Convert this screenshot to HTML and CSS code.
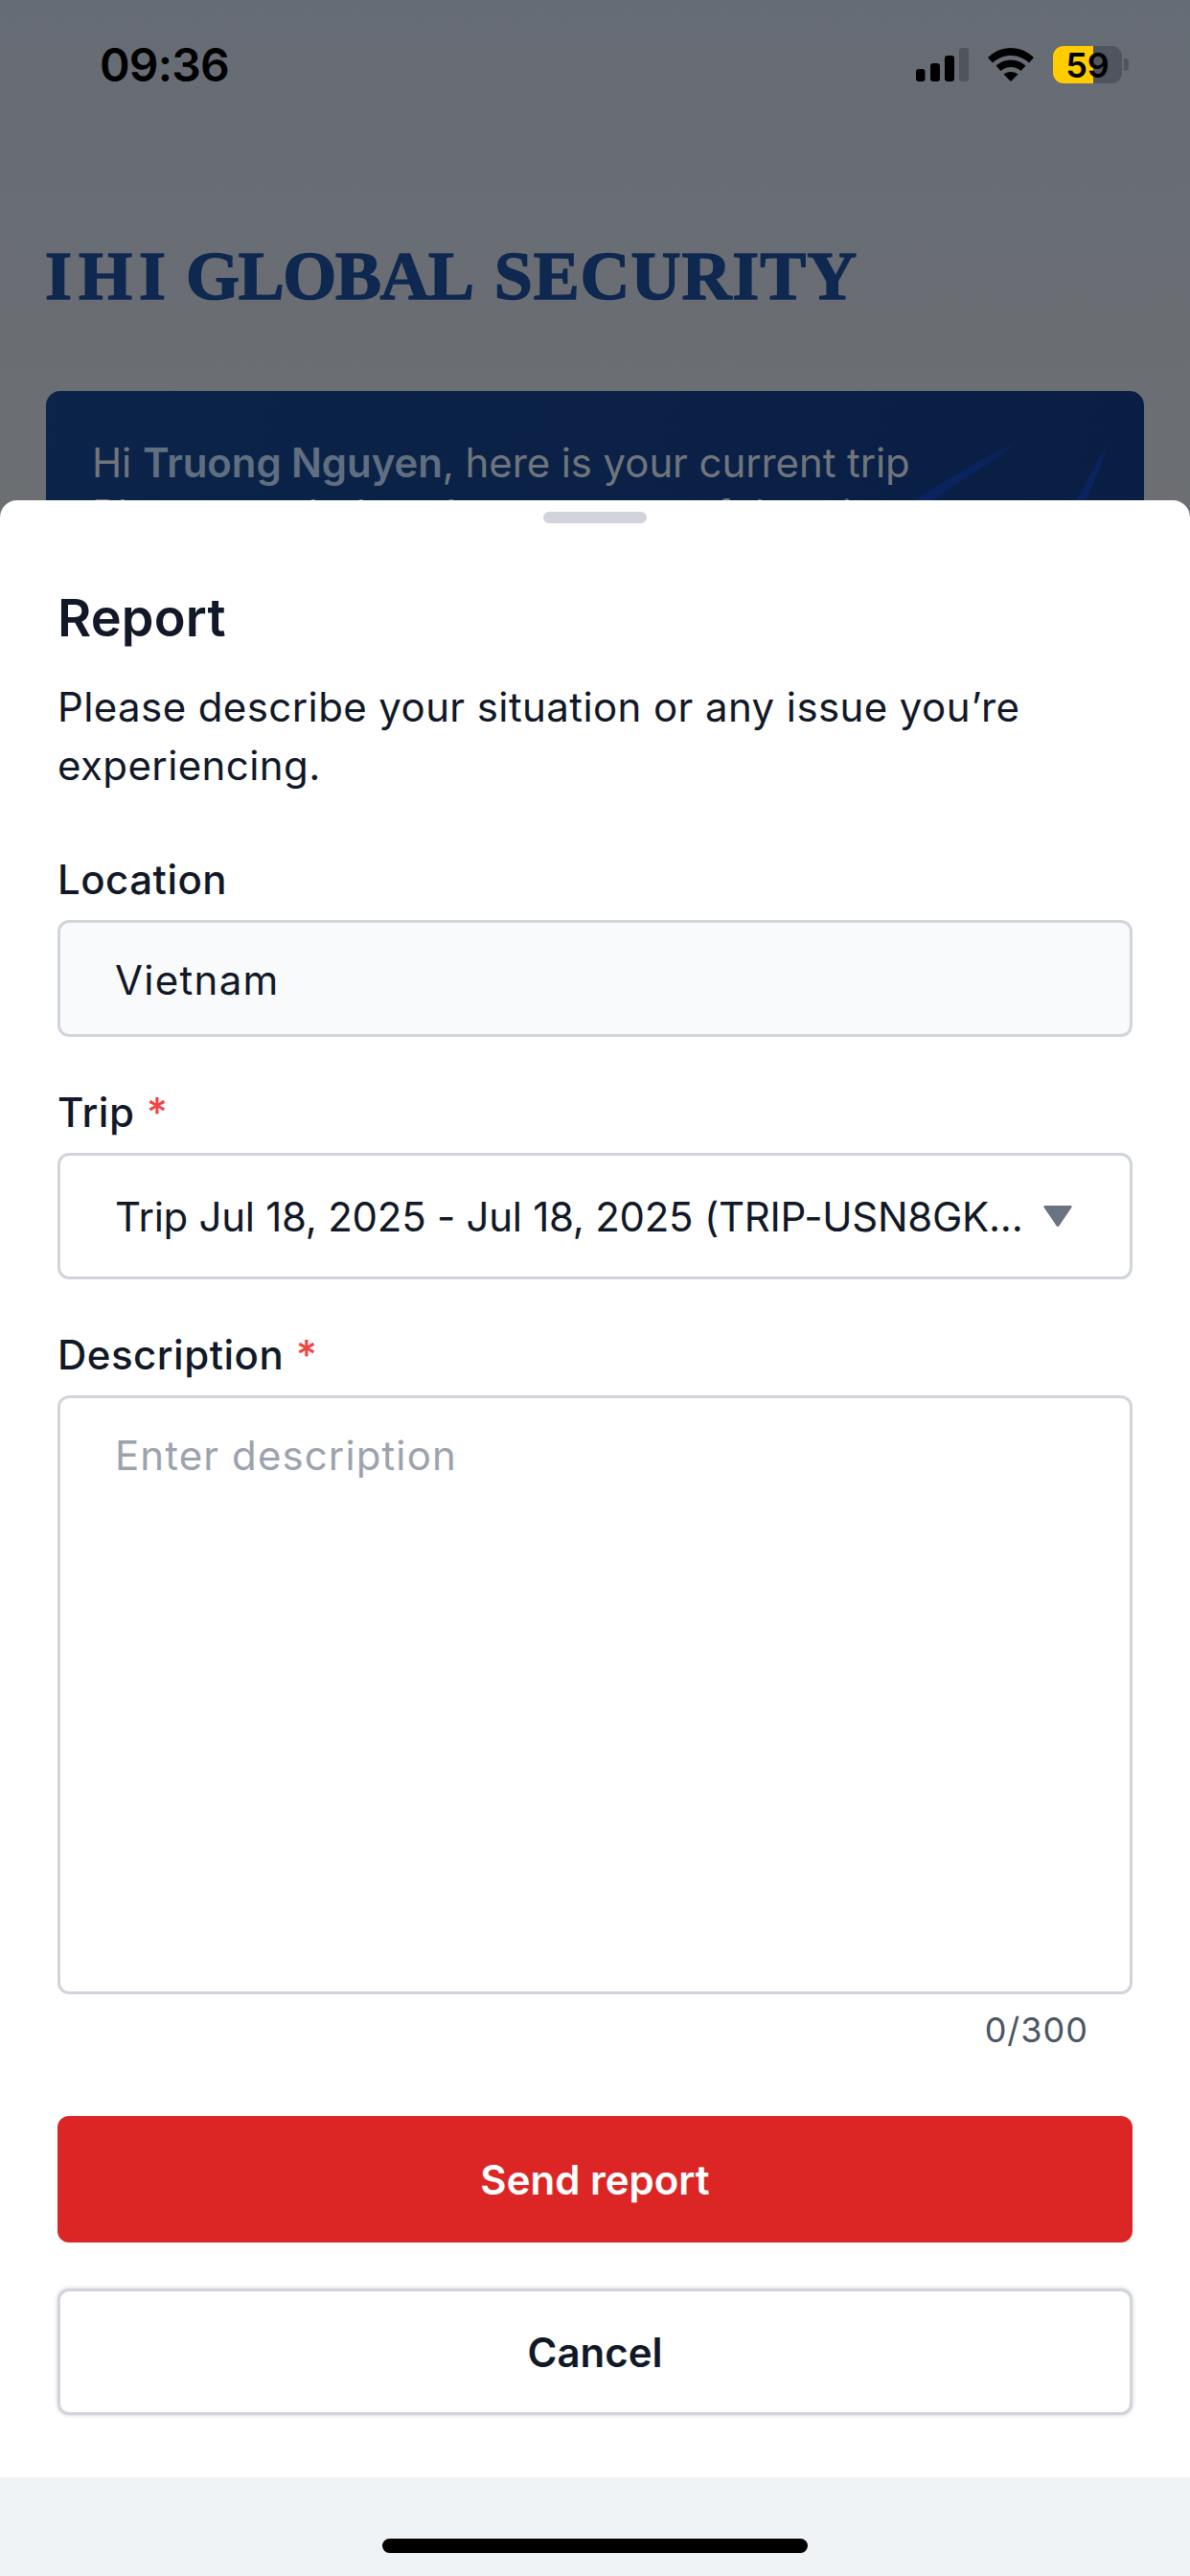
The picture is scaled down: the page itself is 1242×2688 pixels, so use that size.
FILE: index.html
```html
<!DOCTYPE html>
<html lang="en">
<head>
    <meta charset="UTF-8">
    <meta name="viewport" content="width=device-width, initial-scale=1.0">
    <title>IHI Global Security - Report</title>
    <link rel="stylesheet" href="styles.css">
</head>
<body>
<div class="screen">

    <!-- page behind the sheet -->
    <div class="backdrop">
        <div class="status">
            <span class="clock">09:36</span>
            <div class="status-icons">
                <svg class="signal" width="55" height="35" viewBox="0 0 55 35">
                    <rect x="0" y="22" width="9.500" height="13" rx="3"/>
                    <rect x="15" y="16" width="10" height="19" rx="3"/>
                    <rect x="30" y="8" width="10" height="27" rx="3"/>
                    <rect x="45" y="0" width="10" height="35" rx="3" fill="#50545c"/>
                </svg>
                <svg class="wifi" width="48" height="35" viewBox="0 0 48 35">
                    <path d="M24 0C15 0 7 3.500 0 10l5 5.500C10.500 10.500 17 8 24 8s13.500 2.500 19 7.500L48 10C41 3.500 33 0 24 0z"/>
                    <path d="M24 12.500c-6 0-11 2-15.500 6l5 5.500c3-2.700 6.500-4 10.500-4s7.500 1.300 10.500 4l5-5.500c-4.500-4-9.500-6-15.500-6z"/>
                    <path d="M24 25c-3 0-5.500 1-7.500 2.500L24 35l7.500-7.500C29.500 26 27 25 24 25z"/>
                </svg>
                <div class="battery">
                    <div class="battery-fill"></div>
                    <span class="battery-num">59</span>
                    <div class="battery-tip"></div>
                </div>
            </div>
        </div>

        <h1 class="brand">
            <span class="brand-ihi">IHI</span>
            <span class="brand-global">GLOBAL</span>
            <span class="brand-security">SECURITY</span>
        </h1>

        <div class="trip-card">
            <svg class="card-lines" width="1146" height="192" viewBox="0 0 1146 192" fill="none">
                <defs>
                    <linearGradient id="lineFade" x1="0" y1="45" x2="0" y2="114" gradientUnits="userSpaceOnUse">
                        <stop offset="0" stop-color="#0a2460" stop-opacity="0"/>
                        <stop offset="0.5" stop-color="#0a2460"/>
                        <stop offset="1" stop-color="#0a2460"/>
                    </linearGradient>
                </defs>
                <path d="M1032 42C990 64 945 88 905 116L922 116C960 90 1000 66 1032 42z" fill="url(#lineFade)"/>
                <path d="M1110 48C1098 72 1088 94 1074 116L1084 116C1095 94 1104 72 1110 48z" fill="url(#lineFade)"/>
            </svg>
            <p class="card-title">Hi <b>Truong Nguyen</b>, here is your current trip</p>
            <p class="card-sub">Please see below the summary of the trip</p>
        </div>
    </div>

    <!-- report sheet -->
    <div class="sheet">
        <div class="sheet-body">
            <div class="handle"></div>
            <h2 class="sheet-title">Report</h2>
            <p class="sheet-desc">Please describe your situation or any issue you’re experiencing.</p>

            <label class="label">Location</label>
            <div class="field field-disabled">Vietnam</div>

            <label class="label">Trip <span class="req">*</span></label>
            <div class="field field-select">
                <span class="select-text">Trip Jul 18, 2025 - Jul 18, 2025 (TRIP-USN8GK...</span>
                <svg width="30" height="24" viewBox="0 0 30 24"><path d="M2 1h26c1.500 0 2 1 1.200 2.200L16.500 22c-.8 1.200-2.200 1.200-3 0L.8 3.200C0 2 .5 1 2 1z" fill="#6b7280"/></svg>
            </div>

            <label class="label">Description <span class="req">*</span></label>
            <div class="field field-area">Enter description</div>
            <div class="counter">0/300</div>

            <button class="btn btn-send">Send report</button>
            <button class="btn btn-cancel">Cancel</button>
        </div>
        <div class="home-area">
            <div class="home-bar"></div>
        </div>
    </div>
</div>
</body>
</html>
```

FILE: styles.css
```css
*{
    box-sizing:border-box;
}

body{
    margin:0;
    font-family:Inter, "Liberation Sans", sans-serif;
}

.screen{
    position:relative;
    width:1242px;
    height:2688px;
    overflow:hidden;
    background:#eff3f5;
}

/* page behind, already dimmed */
.backdrop{
    height:600px;
    background:linear-gradient(#666c75, #6d6f72);
}

.status{
    display:flex;
    justify-content:space-between;
    align-items:center;
    height:135px;
    padding:0 71px 0 104px;
}

.clock{
    font-size:48px;
    font-weight:600;
    letter-spacing:-0.800px;
    color:#000;
}

.status-icons{
    display:flex;
    align-items:center;
    gap:20px;
}

.signal,
.wifi{
    fill:#000;
}

.battery{
    position:relative;
    display:flex;
    align-items:center;
    justify-content:center;
    width:72px;
    height:39px;
    background:#50545c;
    border-radius:11px;
}

.battery-fill{
    position:absolute;
    left:0;
    top:0;
    width:42px;
    height:100%;
    background:#ffcc00;
    border-radius:11px 0 0 11px;
}

.battery-num{
    position:relative;
    font-size:36px;
    font-weight:600;
    color:#000;
}

.battery-tip{
    position:absolute;
    right:-7px;
    top:13px;
    width:5px;
    height:13px;
    background:#50545c;
    border-radius:0 4px 4px 0;
}

.brand{
    display:flex;
    gap:14px;
    margin:111px 0 0 47px;
    font-family:"Liberation Serif", serif;
    font-size:72px;
    line-height:84px;
    font-weight:700;
    -webkit-text-stroke:1.500px #0f2850;
    color:#0f2850;
}

.brand-ihi{
    letter-spacing:7px;
}

.brand-global{
    letter-spacing:-1.400px;
}

.brand-security{
    margin-left:8px;
    letter-spacing:0.900px;
}

.trip-card{
    position:relative;
    margin:78px 48px 0;
    height:192px;
    padding:48px 48px 0;
    border-radius:15px;
    background:linear-gradient(100deg, #0c2449, #0a1e44);
    overflow:hidden;
}

.card-lines{
    position:absolute;
    left:0;
    top:0;
}

.card-title,
.card-sub{
    position:relative;
    margin:0;
    font-size:42px;
    line-height:54px;
    letter-spacing:-0.100px;
    color:#70757c;
    white-space:nowrap;
}

.card-title b{
    font-weight:600;
    color:#5f6f80;
}

/* sheet */
.sheet{
    position:absolute;
    left:0;
    right:0;
    top:522px;
    bottom:0;
    display:flex;
    flex-direction:column;
}

.sheet-body{
    flex:1;
    padding:12px 60px 0;
    background:#fff;
    border-radius:18px 18px 0 0;
}

.handle{
    width:108px;
    height:12px;
    margin:0 auto;
    background:#d1d5db;
    border-radius:6px;
}

.sheet-title{
    margin:66px 0 0;
    font-size:54px;
    line-height:66px;
    font-weight:600;
    letter-spacing:0.200px;
    color:#111827;
}

.sheet-desc{
    margin:29px 0 0;
    padding-bottom:10px;
    font-size:42px;
    line-height:61px;
    letter-spacing:0.400px;
    color:#111827;
}

.label{
    display:block;
    margin-top:49px;
    font-size:42px;
    line-height:60px;
    font-weight:450;
    letter-spacing:0.500px;
    color:#111827;
}

.req{
    margin-left:1px;
    color:#ef4444;
}

.field{
    display:flex;
    align-items:center;
    margin-top:12px;
    padding:0 57px;
    border:3px solid #d1d5db;
    border-radius:12px;
    font-size:42px;
    letter-spacing:1.300px;
    color:#111827;
}

.field-disabled{
    height:122px;
    padding-top:3px;
    background:#f9fafb;
}

.field-select{
    justify-content:space-between;
    height:132px;
    padding-right:60px;
    letter-spacing:-0.270px;
}

.select-text{
    white-space:nowrap;
}

.field-area{
    align-items:flex-start;
    height:625px;
    padding-top:34px;
    letter-spacing:1.100px;
    color:#9ca3af;
}

.counter{
    margin-top:15px;
    padding-right:46px;
    font-size:36px;
    line-height:44px;
    letter-spacing:1px;
    text-align:right;
    color:#4b5563;
}

.btn{
    display:block;
    width:100%;
    height:132px;
    font-family:Inter, "Liberation Sans", sans-serif;
    font-size:42px;
    font-weight:600;
    border-radius:12px;
}

.btn-send{
    margin-top:68px;
    border:none;
    background:#dc2626;
    color:#fff;
}

.btn-cancel{
    margin-top:48px;
    border:3px solid #d1d5db;
    background:#fff;
    color:#111827;
    box-shadow:0 0 4px rgba(0,0,0,0.2);
}

.home-area{
    display:flex;
    justify-content:center;
    align-items:flex-start;
    height:103px;
    padding-top:64px;
    background:#eff3f5;
}

.home-bar{
    width:444px;
    height:15px;
    background:#000;
    border-radius:8px;
}
```
